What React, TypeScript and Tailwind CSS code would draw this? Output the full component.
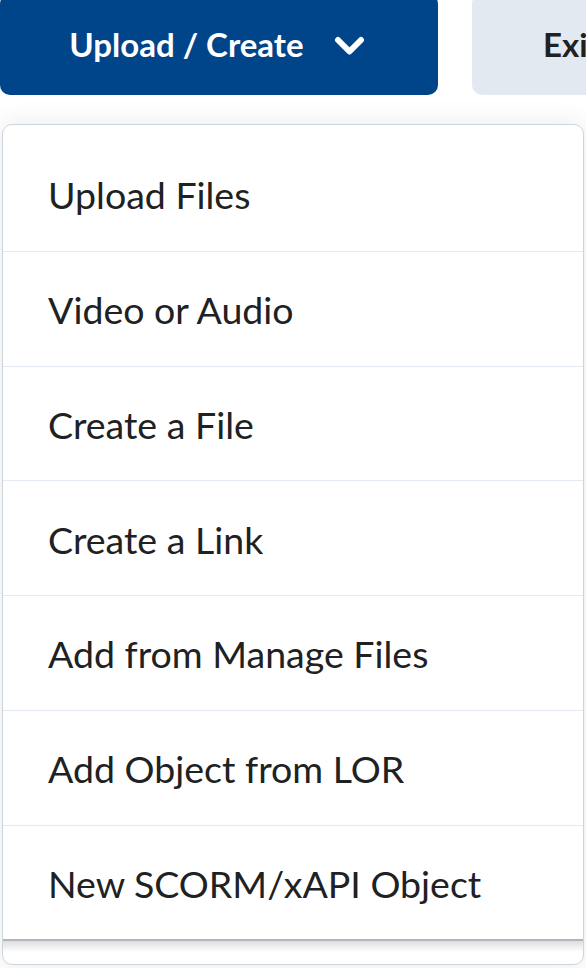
import React from "react";

const items = [
  "Upload Files",
  "Video or Audio",
  "Create a File",
  "Create a Link",
  "Add from Manage Files",
  "Add Object from LOR",
  "New SCORM/xAPI Object",
];

export default function App() {
  return (
    <div className="w-[586px] h-[968px] bg-white overflow-hidden font-['Lato','Noto_Sans',sans-serif]">
      <div className="flex gap-[34px] mt-[-6px] h-[101px] w-[800px]">
        <button className="w-[438px] shrink-0 h-full rounded-[10px] bg-[#004489] text-white font-bold text-[33px] flex items-center justify-center gap-[30px] pr-[4px]">
          <span>Upload / Create</span>
          <svg width="31" height="20" viewBox="0 0 31 20" className="mt-[2px]">
            <path d="M4 4 L15.5 15.5 L27 4" fill="none" stroke="white" strokeWidth="6" strokeLinecap="round" strokeLinejoin="round" />
          </svg>
        </button>
        <button className="w-[260px] shrink-0 h-full rounded-[10px] bg-[#e3e9f1] text-[#202122] font-bold text-[33px] flex items-center pl-[71px]">
          <span className="whitespace-nowrap">Exit Reorder</span>
        </button>
      </div>
      <div className="mt-[29px] mx-[2px] w-[582px] h-[841px] border border-[#cdd5dc] rounded-[10px] bg-white shadow-[0_0_28px_rgba(0,0,0,0.09)] flex flex-col pt-[12px] overflow-hidden">
        {items.map((t, i) => (
          <div
            key={t}
            className={
              i === items.length - 1
                ? "h-[114.8px] shrink-0 flex items-center pl-[45px] pt-[3px] text-[37.5px] text-[#202122] border-b-2 border-[#b3b6b9]"
                : "h-[114.8px] shrink-0 flex items-center pl-[45px] pt-[3px] text-[37.5px] text-[#202122] border-b border-[#e3e9f1]"
            }
          >
            {t}
          </div>
        ))}
        <div className="h-[11px] shrink-0 bg-gradient-to-b from-[#dcdee1] to-white" />
      </div>
    </div>
  );
}
